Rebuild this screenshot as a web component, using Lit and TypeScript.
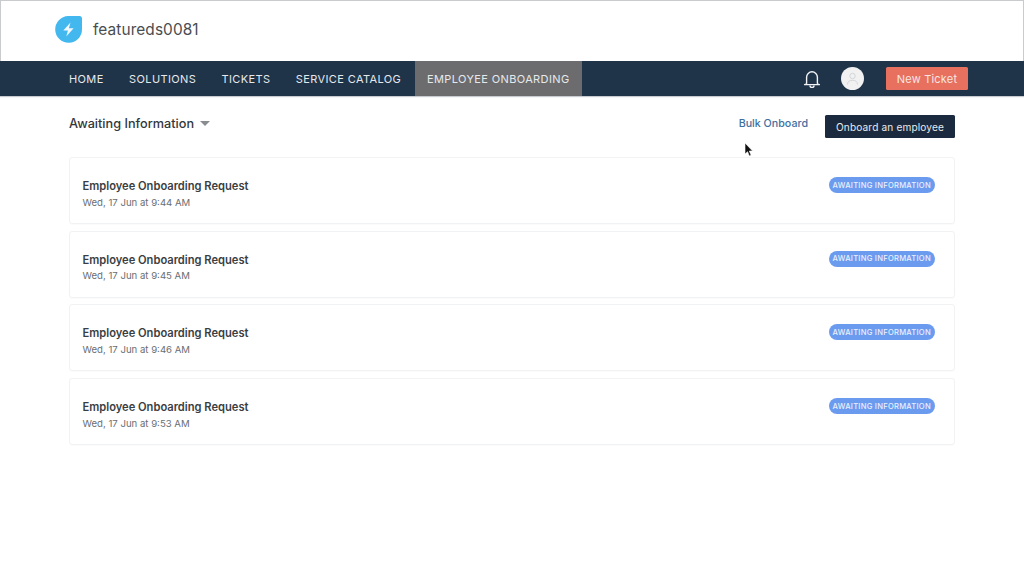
import { LitElement, html, css, svg } from "lit";
import { customElement } from "lit/decorators.js";

const DATES = ["9:44 AM", "9:45 AM", "9:46 AM", "9:53 AM"];
const NAV = ["HOME", "SOLUTIONS", "TICKETS", "SERVICE CATALOG"];

@customElement("app-root")
export class AppRoot extends LitElement {
  static styles = css`
    :host {
      display: block;
      position: relative;
      width: 1024px;
      height: 576px;
      overflow: hidden;
      background: #fff;
      font-family: Inter, "Liberation Sans", sans-serif;
    }
    .top {
      height: 61px;
      box-sizing: border-box;
      border: 1px solid #c9cbcd;
      border-bottom: none;
      display: flex;
      align-items: center;
      gap: 10px;
      padding: 0 0 3px 53px;
    }
    .logo { width: 29px; height: 29px; display: block; margin-top: -1px; }
    .brand { font-size: 15.4px; color: #4a4d50; letter-spacing: 0.1px; }
    .nav {
      height: 35px;
      background: #1f3349;
      display: flex;
      align-items: stretch;
      padding-left: 56px;
      box-shadow: 0 1px 1px #c8ccd0;
    }
    .nav a {
      display: flex;
      align-items: center;
      padding: 0 12.4px 0 13px;
      font-size: 11px;
      letter-spacing: 0.38px;
      color: #e6e9ec;
      white-space: nowrap;
    }
    .nav a.active { background: #6c6c6e; padding: 0 12.4px; margin-left: 1px; }
    .right {
      margin-left: auto;
      display: flex;
      align-items: center;
      padding-right: 56px;
    }
    .bell { width: 18px; height: 20px; display: block; margin-right: 20px; }
    .avatar {
      width: 23px;
      height: 23px;
      border-radius: 50%;
      background: #f1f1f1;
      display: flex;
      align-items: center;
      justify-content: center;
      margin-right: 22px;
    }
    .avatar svg { width: 13px; height: 13px; display: block; }
    .new {
      width: 82px;
      height: 23px;
      display: flex;
      align-items: center;
      justify-content: center;
      background: #e8705f;
      color: #f7e6e2;
      font-size: 11px;
      letter-spacing: 0.2px;
      border-radius: 1.5px;
    }
    .main { padding: 0 69px; }
    .head {
      height: 61px;
      display: flex;
      align-items: center;
      justify-content: space-between;
    }
    .filter {
      display: flex;
      align-items: center;
      gap: 6px;
      font-size: 12.7px;
      font-weight: 500;
      color: #33373b;
      margin-top: -6px;
    }
    .caret {
      width: 0;
      height: 0;
      border-left: 5px solid transparent;
      border-right: 5px solid transparent;
      border-top: 5px solid #8a8d90;
    }
    .actions { display: flex; align-items: center; gap: 17px; }
    .bulk { font-size: 10.7px; font-weight: 500; color: #3f6f9e; margin-top: -6px; }
    .primary {
      width: 130px;
      height: 23px;
      display: flex;
      align-items: center;
      justify-content: center;
      background: #1b2a3e;
      color: #e8ebee;
      font-size: 10.1px;
      letter-spacing: 0.15px;
      border-radius: 1.5px;
    }
    .list { display: flex; flex-direction: column; gap: 6.7px; }
    .card {
      height: 67px;
      box-sizing: border-box;
      border: 1px solid #f1f2f4;
      border-radius: 3px;
      padding: 0 19px 0 12.5px;
      display: flex;
      justify-content: space-between;
      box-shadow: 0 1px 1px rgba(30, 40, 50, 0.02);
    }
    .title { font-size: 11.15px; font-weight: 600; color: #3a3e42; margin-top: 21px; line-height: 14px; }
    .date { font-size: 9.6px; color: #6a6e72; margin-top: 3.8px; line-height: 12px; }
    .badge {
      height: 16px;
      width: 106.5px;
      margin-top: 19px;
      border-radius: 8px;
      background: #6b9bef;
      color: #e9f0fd;
      font-size: 7.6px;
      font-weight: 500;
      letter-spacing: 0.25px;
      display: flex;
      align-items: center;
      justify-content: center;
      white-space: nowrap;
    }
    .cursor { position: absolute; left: 744px; top: 142px; width: 11px; height: 16px; }
  `;

  render() {
    return html`
      <div class="top">
        <svg class="logo" viewBox="0 0 29 29">
          <path d="M14.2 1H25.5a2.5 2.5 0 0 1 2.5 2.5V14.2A13.4 13.4 0 1 1 14.2 1Z" fill="#43b8ee" />
          <path d="M16.5 7.5L9.3 15.6h4.6l-1.6 5.9 7.3-8.2h-4.7Z" fill="#eef8fd" />
        </svg>
        <span class="brand">featureds0081</span>
      </div>
      <div class="nav">
        ${NAV.map((n) => html`<a>${n}</a>`)}
        <a class="active">EMPLOYEE ONBOARDING</a>
        <div class="right">
          <svg class="bell" viewBox="0 0 18 20" fill="none" stroke="#f2f4f6" stroke-width="1.4">
            ${svg`<path d="M3.6 14.6V8.2a5.4 5.4 0 0 1 10.8 0v6.4" />
            <path d="M1.6 15.6c1.2-.2 2-.5 2-1M16.4 15.6c-1.2-.2-2-.5-2-1M1.6 15.6h14.8" stroke-linecap="round" />
            <path d="M7 16.4a2 2 0 0 0 4 0" />`}
          </svg>
          <div class="avatar">
            <svg viewBox="0 0 13 13" fill="none" stroke="#d3d6d9" stroke-width="1">
              <circle cx="6.5" cy="4" r="2.7" />
              <path d="M1.5 12.5c0-3 2-4.2 5-4.2s5 1.2 5 4.2" />
            </svg>
          </div>
          <div class="new">New Ticket</div>
        </div>
      </div>
      <div class="main">
        <div class="head">
          <div class="filter">Awaiting Information <span class="caret"></span></div>
          <div class="actions">
            <span class="bulk">Bulk Onboard</span>
            <div class="primary">Onboard an employee</div>
          </div>
        </div>
        <div class="list">
          ${DATES.map(
            (d) => html`<div class="card">
              <div>
                <div class="title">Employee Onboarding Request</div>
                <div class="date">Wed, 17 Jun at ${d}</div>
              </div>
              <div class="badge">AWAITING INFORMATION</div>
            </div>`
          )}
        </div>
      </div>
      <svg class="cursor" viewBox="0 0 11 16">
        <path d="M1 1v11l2.6-2.3 1.7 4.3 1.8-.8-1.8-4.2H8.6Z" fill="#111" stroke="#fff" stroke-width=".6" />
      </svg>
    `;
  }
}
